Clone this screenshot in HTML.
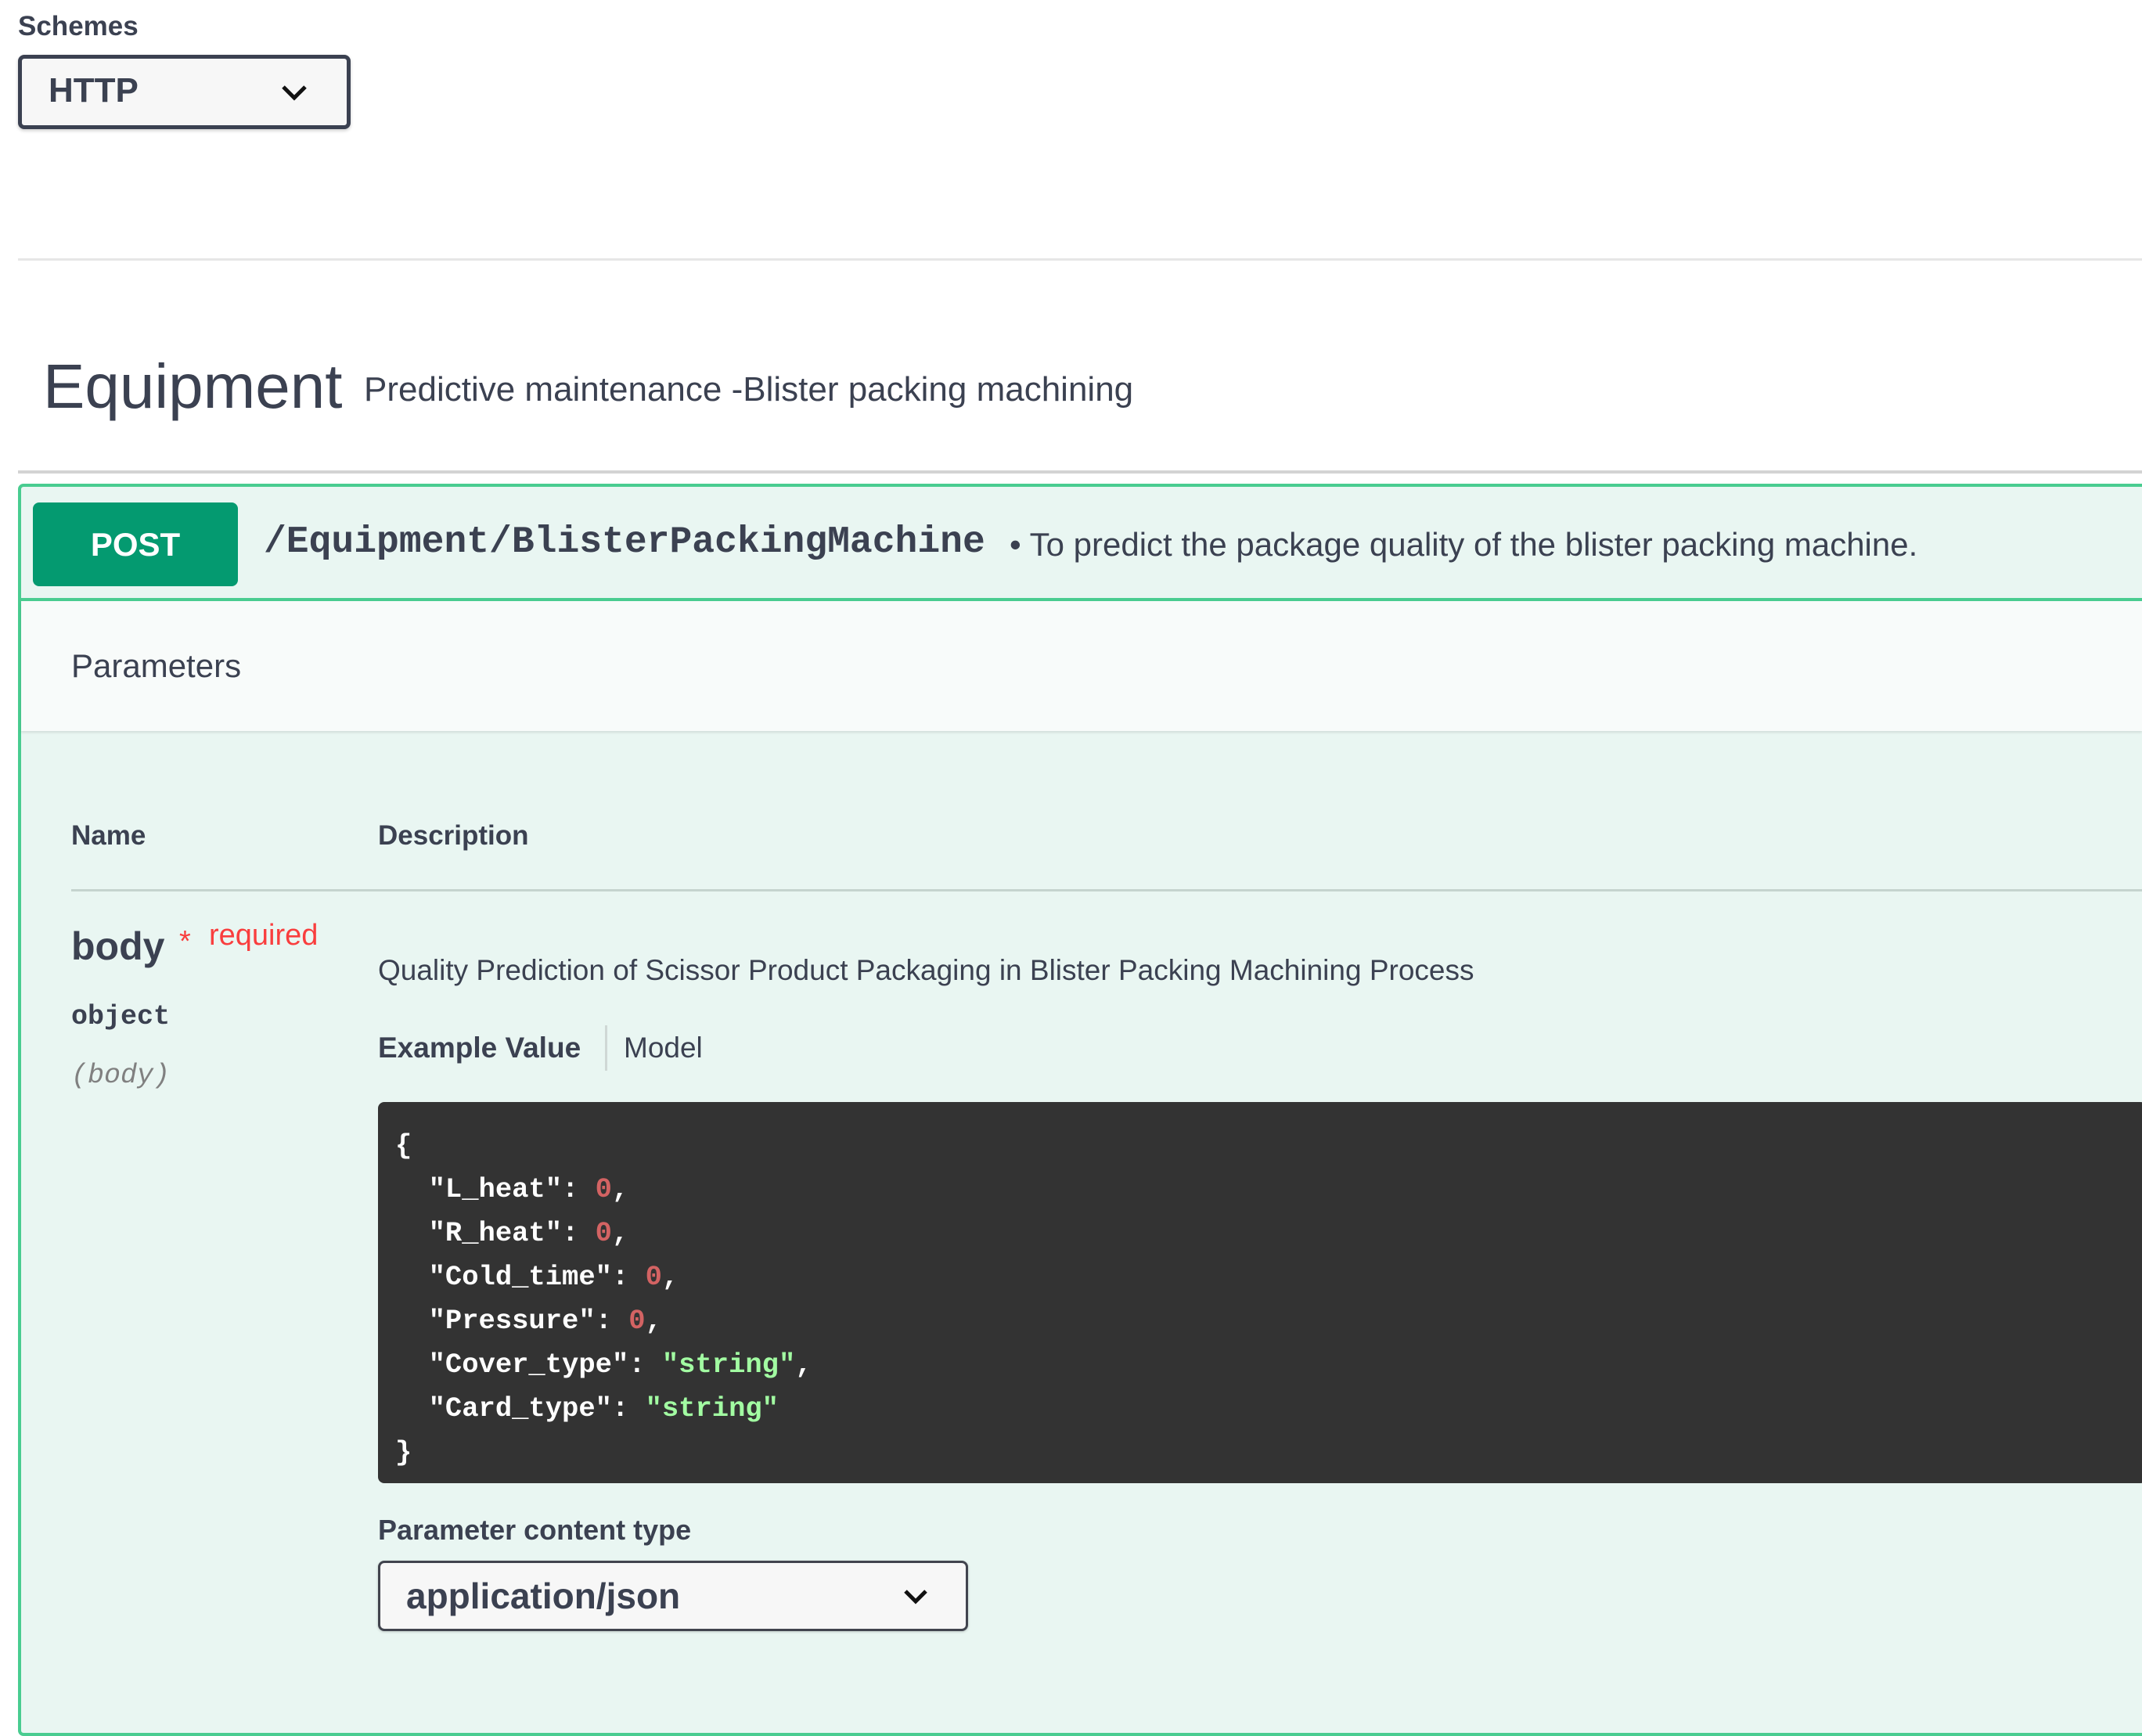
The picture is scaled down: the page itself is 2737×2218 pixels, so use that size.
<!DOCTYPE html>
<html><head><meta charset="utf-8"><style>
*{margin:0;padding:0;box-sizing:border-box}
body{width:2737px;height:2198px;background:#fff;position:relative;overflow:hidden;font-family:"Liberation Sans",sans-serif;color:#3b4151}
.a{position:absolute;white-space:nowrap}
.mono{font-family:"Liberation Mono",monospace}
</style></head><body>
<div class="a" style="left:23px;top:14px;font-size:35px;font-weight:bold">Schemes</div>
<div class="a" style="left:23px;top:70px;width:425px;height:95px;border:5px solid #3b4151;border-radius:8px;background:#f7f7f7;box-shadow:0 2px 4px rgba(0,0,0,.2)">
  <div class="a" style="left:34px;top:16px;font-size:44px;font-weight:bold">HTTP</div>
  <svg class="a" style="left:330px;top:32px" width="36" height="24" viewBox="0 0 36 24"><path d="M4 4 L18 18 L32 4" fill="none" stroke="#111" stroke-width="5"/></svg>
</div>
<div class="a" style="left:23px;top:330px;width:2714px;height:3px;background:#e6e6e6"></div>

<div class="a" style="left:55px;top:448px;font-size:80px">Equipment</div>
<div class="a" style="left:465px;top:473px;font-size:44px">Predictive maintenance -Blister packing machining</div>
<div class="a" style="left:23px;top:601px;width:2714px;height:4px;background:#d3d3d3"></div>

<div class="a" style="left:23px;top:618px;width:2740px;height:1600px;border:4px solid #49cc90;border-radius:7px;background:#e9f6f2"></div>
<div class="a" style="left:27px;top:764px;width:2710px;height:4px;background:#49cc90"></div>
<div class="a" style="left:42px;top:642px;width:262px;height:107px;background:#049a70;border-radius:8px;color:#fff;font-weight:bold;font-size:42px;text-align:center;line-height:107px">POST</div>
<div class="a mono" style="left:337px;top:666px;font-size:48px;font-weight:bold">/Equipment/BlisterPackingMachine</div>
<div class="a" style="left:1290px;top:672px;font-size:42px">• To predict the package quality of the blister packing machine.</div>

<div class="a" style="left:27px;top:768px;width:2710px;height:166px;background:#f8fbfa;box-shadow:0 2px 3px rgba(0,0,0,.1)"></div>
<div class="a" style="left:91px;top:827px;font-size:42px">Parameters</div>

<div class="a" style="left:91px;top:1048px;font-size:35px;font-weight:bold">Name</div>
<div class="a" style="left:483px;top:1048px;font-size:35px;font-weight:bold">Description</div>
<div class="a" style="left:91px;top:1136px;width:2646px;height:3px;background:#c5d4cf"></div>

<div class="a" style="left:91px;top:1180px;font-size:50px;font-weight:bold;color:#3b4151">body</div>
<div class="a" style="left:229px;top:1182px;font-size:38px;color:#f93e3e">*</div>
<div class="a" style="left:267px;top:1174px;font-size:38px;color:#f93e3e">required</div>
<div class="a mono" style="left:91px;top:1279px;font-size:35px;font-weight:bold">object</div>
<div class="a mono" style="left:91px;top:1354px;font-size:35px;font-style:italic;color:#808080">(body)</div>

<div class="a" style="left:483px;top:1219px;font-size:37px">Quality Prediction of Scissor Product Packaging in Blister Packing Machining Process</div>
<div class="a" style="left:483px;top:1318px;font-size:37px;font-weight:bold">Example Value</div>
<div class="a" style="left:773px;top:1310px;width:3px;height:58px;background:#cfd8d5"></div>
<div class="a" style="left:797px;top:1318px;font-size:37px">Model</div>

<div class="a mono" style="left:483px;top:1408px;width:2260px;height:487px;background:#333;border-radius:8px;color:#fff;font-size:35.5px;font-weight:bold;line-height:56px;padding:28px 0 0 22px;white-space:pre">{
  "L_heat": <span style="color:#d36363">0</span>,
  "R_heat": <span style="color:#d36363">0</span>,
  "Cold_time": <span style="color:#d36363">0</span>,
  "Pressure": <span style="color:#d36363">0</span>,
  "Cover_type": <span style="color:#a2fca2">"string"</span>,
  "Card_type": <span style="color:#a2fca2">"string"</span>
}</div>

<div class="a" style="left:483px;top:1934px;font-size:36px;font-weight:bold">Parameter content type</div>
<div class="a" style="left:483px;top:1994px;width:754px;height:90px;border:3.5px solid #41444e;border-radius:8px;background:#f7f7f7;box-shadow:0 1px 3px rgba(0,0,0,.2)">
  <div class="a" style="left:33px;top:15px;font-size:46px;font-weight:bold">application/json</div>
  <svg class="a" style="left:667px;top:32px" width="34" height="22" viewBox="0 0 34 22"><path d="M4 4 L17 17 L30 4" fill="none" stroke="#111" stroke-width="5"/></svg>
</div>
</body></html>
